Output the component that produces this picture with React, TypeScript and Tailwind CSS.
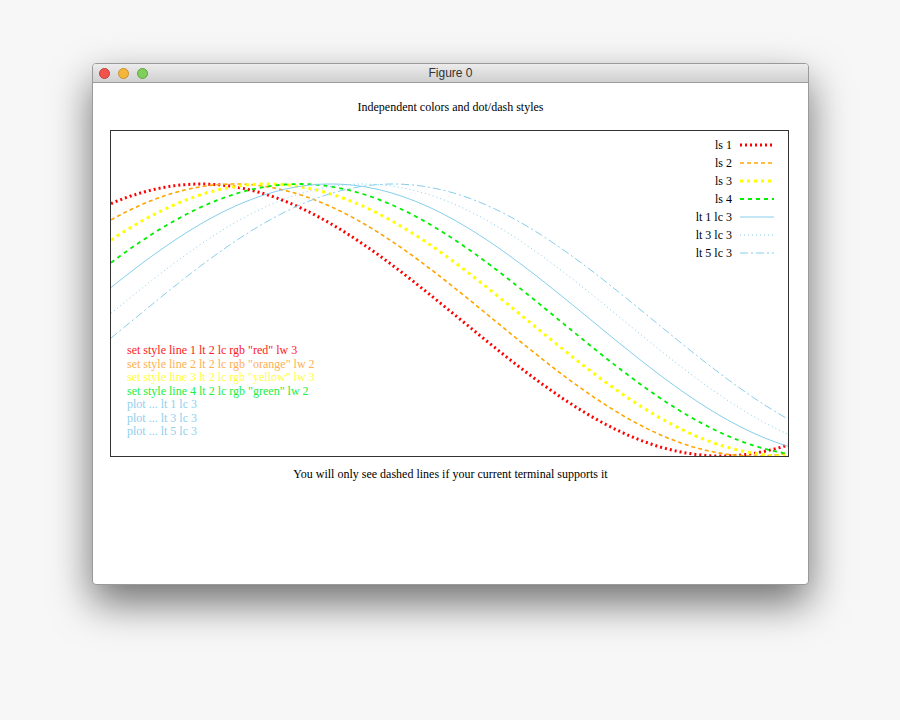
import React from "react";

const curves = [
  { peak: 200, color: "#ff0000", w: 3, dash: "2 3" },
  { peak: 233, color: "#ffa500", w: 1.6, dash: "4 3" },
  { peak: 266, color: "#ffff00", w: 3, dash: "3 4" },
  { peak: 298, color: "#00ee00", w: 1.8, dash: "4 4" },
  { peak: 330, color: "#87ceeb", w: 1, dash: "" },
  { peak: 362, color: "#87ceeb", w: 1, dash: "1 3" },
  { peak: 392, color: "#87ceeb", w: 1, dash: "8 3 2 3" },
];

function path(peak: number) {
  const pts: string[] = [];
  for (let x = 110; x <= 788; x += 3) {
    const y = 324 - 136 * Math.cos(((x - peak) / 1040) * 2 * Math.PI);
    pts.push(`${(x - 110).toFixed(1)},${(y - 135).toFixed(1)}`);
  }
  return "M" + pts.join(" L");
}

const legend = ["ls 1", "ls 2", "ls 3", "ls 4", "lt 1 lc 3", "lt 3 lc 3", "lt 5 lc 3"];
const notes = [
  ["set style line 1 lt 2 lc rgb \"red\" lw 3", "#ff2020"],
  ["set style line 2 lt 2 lc rgb \"orange\" lw 2", "#ffb050"],
  ["set style line 3 lt 2 lc rgb \"yellow\" lw 3", "#ffff40"],
  ["set style line 4 lt 2 lc rgb \"green\" lw 2", "#20ee40"],
  ["plot ... lt 1 lc 3", "#8fcfee"],
  ["plot ... lt 3 lc 3", "#8fcfee"],
  ["plot ... lt 5 lc 3", "#8fcfee"],
];

export default function App() {
  return (
    <div className="w-[900px] h-[720px] bg-[#f7f7f7] pt-[63px] pl-[92px]" style={{ fontFamily: '"Liberation Serif", serif' }}>
      <div className="w-[717px] h-[522px] bg-white rounded-[4px] shadow-[0_18px_40px_rgba(0,0,0,0.55)] border border-[#9a9a9a] overflow-hidden flex flex-col">
        <div className="h-[19px] bg-gradient-to-b from-[#ececec] to-[#d0d0d0] border-b border-[#9d9d9d] flex items-center relative" style={{ fontFamily: '"Liberation Sans", sans-serif' }}>
          <div className="flex gap-[8px] pl-[6px]">
            <span className="w-[11px] h-[11px] rounded-full bg-[#f2524c] border border-[#c4403a]" />
            <span className="w-[11px] h-[11px] rounded-full bg-[#f5b73b] border border-[#c99030]" />
            <span className="w-[11px] h-[11px] rounded-full bg-[#7fcf5a] border border-[#5ea645]" />
          </div>
          <div className="absolute inset-0 flex items-center justify-center text-[12px] text-[#333]">Figure 0</div>
        </div>
        <div className="text-center text-[12px] text-black mt-[17px] leading-[14px]">Independent colors and dot/dash styles</div>
        <div className="relative ml-[17px] mt-[16px] w-[679px] h-[327px] border border-[#333]">
          <svg width="677" height="325" className="absolute inset-0">
            {curves.map((c, i) => (
              <path key={i} d={path(c.peak)} fill="none" stroke={c.color} strokeWidth={c.w} strokeDasharray={c.dash || undefined} />
            ))}
          </svg>
          <div className="absolute right-[14px] top-[5px] flex flex-col text-[12px] leading-[18px] text-black">
            {legend.map((l, i) => (
              <div key={l} className="flex items-center justify-end gap-[8px]">
                <span>{l}</span>
                <svg width="34" height="4"><line x1="0" y1="2" x2="34" y2="2" stroke={curves[i].color} strokeWidth={curves[i].w} strokeDasharray={curves[i].dash || undefined} /></svg>
              </div>
            ))}
          </div>
          <div className="absolute left-[16px] top-[213px] flex flex-col text-[12px] leading-[13.5px]">
            {notes.map(([t, c]) => (
              <div key={t} style={{ color: c }}>{t}</div>
            ))}
          </div>
        </div>
        <div className="text-center text-[12px] text-black mt-[8px]">You will only see dashed lines if your current terminal supports it</div>
      </div>
    </div>
  );
}
